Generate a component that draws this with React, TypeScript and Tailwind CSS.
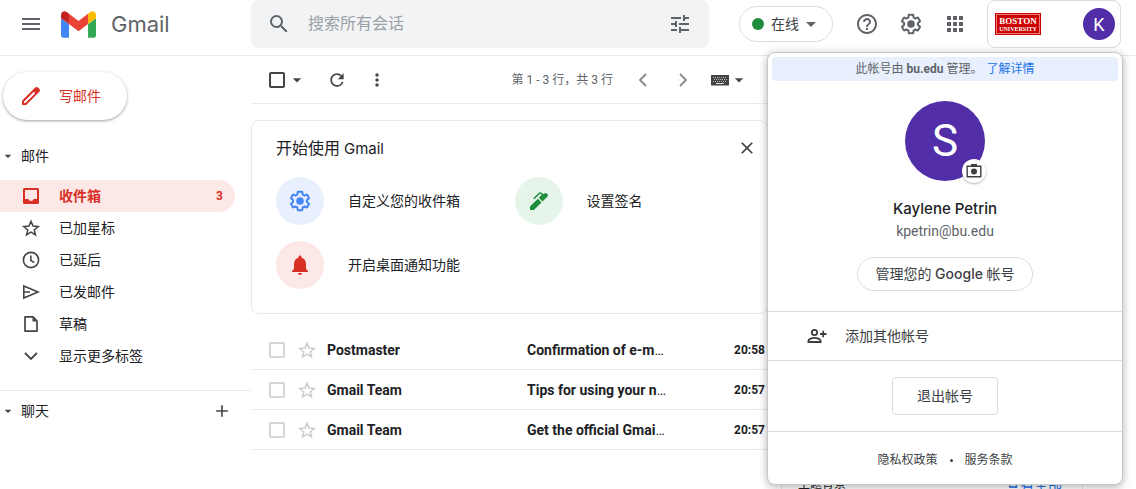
import type { ReactNode } from 'react';
import {
  MdAdd,
  MdApps,
  MdArrowDropDown,
  MdClose,
  MdHelpOutline,
  MdMenu,
  MdMoreVert,
  MdNotifications,
  MdRefresh,
  MdSearch,
  MdTune,
} from 'react-icons/md';

function GearIcon({ className }: { className: string }) {
  return (
    <svg viewBox="0 0 24 24" className={className} fill="currentColor" aria-hidden="true">
      <path d="M13.85 22.25h-3.7c-.74 0-1.36-.54-1.45-1.27l-.27-1.89c-.27-.14-.53-.29-.79-.46l-1.8.72c-.7.26-1.47-.03-1.81-.65L2.2 15.53c-.35-.66-.2-1.44.36-1.88l1.53-1.19c-.01-.15-.02-.3-.02-.46 0-.15.01-.31.02-.46l-1.52-1.19c-.59-.45-.74-1.26-.37-1.88l1.85-3.19c.34-.62 1.11-.9 1.79-.63l1.81.73c.26-.17.52-.32.78-.46l.27-1.91c.09-.7.71-1.25 1.44-1.25h3.7c.74 0 1.36.54 1.45 1.27l.27 1.89c.27.14.53.29.79.46l1.8-.72c.71-.26 1.48.03 1.82.65l1.84 3.18c.36.66.2 1.44-.36 1.88l-1.52 1.19c.01.15.02.3.02.46s-.01.31-.02.46l1.52 1.19c.56.45.72 1.23.37 1.86l-1.86 3.22c-.34.62-1.11.9-1.8.63l-1.8-.72c-.26.17-.52.32-.78.46l-.27 1.91c-.1.68-.72 1.22-1.46 1.22zm-3.23-2h2.76l.37-2.55.53-.22c.44-.18.88-.44 1.34-.78l.45-.34 2.38.96 1.38-2.4-2.03-1.58.07-.56c.03-.26.06-.51.06-.78s-.03-.53-.06-.78l-.07-.56 2.03-1.58-1.39-2.4-2.39.96-.45-.35c-.42-.32-.87-.58-1.33-.77l-.52-.22-.37-2.55h-2.76l-.37 2.55-.53.21c-.44.19-.88.44-1.34.79l-.45.33-2.38-.95-1.39 2.39 2.03 1.58-.07.56a7 7 0 0 0-.06.79c0 .26.02.53.06.78l.07.56-2.03 1.58 1.38 2.4 2.39-.96.45.35c.43.33.86.58 1.33.77l.53.22.38 2.55z" />
      <circle cx="12" cy="12" r="3.8" />
    </svg>
  );
}

function GmailMark() {
  return (
    <svg viewBox="52 42 88 66" className="h-[27px] w-[35px]" aria-hidden="true">
      <path fill="#4285f4" d="M58 108h14V74L52 59v43c0 3.32 2.69 6 6 6" />
      <path fill="#34a853" d="M120 108h14c3.32 0 6-2.69 6-6V59l-20 15" />
      <path fill="#fbbc04" d="M120 48v26l20-15v-8c0-7.42-8.47-11.65-14.4-7.2" />
      <path fill="#ea4335" d="M72 74V48l24 18 24-18v26L96 92" />
      <path fill="#c5221f" d="M52 51v8l20 15V48l-5.6-4.2c-5.94-4.45-14.4-.22-14.4 7.2" />
    </svg>
  );
}

function PencilIcon() {
  return (
    <svg viewBox="0 0 24 24" className="size-6" fill="currentColor" aria-hidden="true">
      <path d="M20.41 4.94l-1.35-1.35c-.78-.78-2.05-.78-2.83 0L3 16.82V21h4.18L20.41 7.77c.79-.78.79-2.05 0-2.83zM6.41 19.06L5 19v-1.36l9.82-9.82 1.41 1.41z" />
    </svg>
  );
}

function InboxIcon() {
  return (
    <svg viewBox="0 0 20 20" className="size-5" fill="currentColor" aria-hidden="true">
      <path fillRule="evenodd" d="M3.6 2h12.8C17.3 2 18 2.7 18 3.6v12.8c0 .9-.7 1.6-1.6 1.6H3.6C2.7 18 2 17.3 2 16.4V3.6C2 2.7 2.7 2 3.6 2zM4 4v9h3.3c.4 1.2 1.4 2 2.7 2s2.3-.8 2.7-2H16V4z" />
    </svg>
  );
}

function StarIcon({ className }: { className: string }) {
  return (
    <svg viewBox="0 0 20 20" className={className} fill="none" stroke="currentColor" strokeWidth="1.5" aria-hidden="true">
      <path d="M10 3.2l2 4.9 5.2.4-4 3.4 1.3 5.1-4.5-2.8L5.500 17l1.300-5.100-4-3.400 5.200-.4z" />
    </svg>
  );
}

function ClockIcon() {
  return (
    <svg viewBox="0 0 20 20" className="size-5" fill="none" stroke="currentColor" strokeWidth="1.6" aria-hidden="true">
      <circle cx="10" cy="10" r="7.600" />
      <path d="M9.800 5.500v4.800l3.400 2.400" />
    </svg>
  );
}

function SendIcon() {
  return (
    <svg viewBox="0 0 20 20" className="size-5" fill="none" stroke="currentColor" strokeWidth="1.6" aria-hidden="true">
      <path d="M2.800 3.900v12.200L17 10zM2.800 10H9" />
    </svg>
  );
}

function FileIcon() {
  return (
    <svg viewBox="0 0 20 20" className="size-5" fill="none" stroke="currentColor" strokeWidth="1.700" aria-hidden="true">
      <path d="M4 2.900h8L16 7v10.100H4z" strokeLinejoin="round" />
      <path d="M11.500 3v4.500H16z" fill="currentColor" stroke="none" />
    </svg>
  );
}

function Chevron({ d, className }: { d: string; className: string }) {
  return (
    <svg viewBox="0 0 20 20" className={className} fill="none" stroke="currentColor" strokeWidth="1.800" aria-hidden="true">
      <path d={d} />
    </svg>
  );
}

function KeyboardIcon() {
  return (
    <svg viewBox="0 0 18 12" className="h-3 w-[18px]" aria-hidden="true">
      <path fill="#444" d="M0 1h18v10.500H0z" />
      <path stroke="#bbb" strokeWidth="1" strokeDasharray="1 1" d="M2 3.500h14M3 5.500h13M2 7.500h14" />
      <path stroke="#ddd" d="M5 9.500h8" />
    </svg>
  );
}

function PenIcon() {
  return (
    <svg viewBox="0 0 20 20" className="size-5" fill="#1e8e3e" aria-hidden="true">
      <path d="M1 15.500L8.800 7.700l3.700 3.700L4.800 19H1z" />
      <path d="M9.800 6.700L14 2.500l.8.800 1-1q.8-.8 1.600 0l1.300 1.300q.8.800 0 1.600l-5.200 5.200z" />
      <path d="M4.800 7.800l5.300-5.300q1.200-1 2.300 0l1.200 1.200" fill="none" stroke="#1e8e3e" strokeWidth="1.600" />
    </svg>
  );
}

function CameraIcon() {
  return (
    <svg viewBox="0 0 16 16" className="size-4" aria-hidden="true">
      <path fill="#3c4043" d="M5 1h6v2H5z" />
      <path fill="none" stroke="#3c4043" strokeWidth="1.400" d="M1.200 3.200h13.600v10.600H1.200z" />
      <circle cx="8" cy="8.500" r="3" fill="#3c4043" />
    </svg>
  );
}

function PersonAddIcon() {
  return (
    <svg viewBox="0 0 20 16" className="h-4 w-5" fill="none" stroke="#3c4043" strokeWidth="1.800" aria-hidden="true">
      <circle cx="7.500" cy="4.500" r="2.700" />
      <path d="M1.400 14v-1.300c0-1.900 4-2.900 6.100-2.900s6.100 1 6.100 2.900V14zM13 6h6.500M16.200 2.700v6.600" />
    </svg>
  );
}

const folders: { label: string; icon: ReactNode; count?: number }[] = [
  { label: '收件箱', icon: <InboxIcon />, count: 3 },
  { label: '已加星标', icon: <StarIcon className="size-5" /> },
  { label: '已延后', icon: <ClockIcon /> },
  { label: '已发邮件', icon: <SendIcon /> },
  { label: '草稿', icon: <FileIcon /> },
  { label: '显示更多标签', icon: <Chevron d="M4 7l6 6 6-6" className="size-5" /> },
];

const mails = [
  { from: 'Postmaster', subject: 'Confirmation of e-m', time: '20:58' },
  { from: 'Gmail Team', subject: 'Tips for using your n', time: '20:57' },
  { from: 'Gmail Team', subject: 'Get the official Gmai', time: '20:57' },
];

function Header() {
  return (
    <header className="flex h-14 shrink-0 items-start border-b border-[#ebebeb] text-[#5f6368]">
      <div className="flex h-12 w-[251px] shrink-0 items-center pl-[19px]">
        <button aria-label="主菜单">
          <MdMenu className="size-6" />
        </button>
        <a href="#inbox" className="ml-[18px] flex items-center gap-[15px]">
          <GmailMark />
          <span className="font-['Inter','Noto_Sans_CJK_SC',sans-serif] text-[22px] leading-7">Gmail</span>
        </a>
      </div>
      <form className="mr-[30px] flex h-12 min-w-0 flex-1 items-center rounded-lg bg-[#f1f3f4] pr-[17px] pl-4">
        <button type="button" aria-label="搜索">
          <MdSearch className="size-6" />
        </button>
        <input
          aria-label="搜索所有会话"
          placeholder="搜索所有会话"
          className="ml-[17px] min-w-0 flex-1 bg-transparent text-base outline-none placeholder:text-[#9aa0a6]"
        />
        <button type="button" aria-label="搜索选项">
          <MdTune className="size-6" />
        </button>
      </form>
      <div className="flex h-12 shrink-0 items-center pr-[15px]">
        <button className="flex h-9 w-[94px] items-center rounded-full border border-[#dadce0] pl-3 text-sm text-[#3c4043]">
          <span className="mr-[7px] size-3 rounded-full bg-[#1e8e3e]" />
          在线
          <MdArrowDropDown className="size-6 text-[#5f6368]" />
        </button>
        <div className="ml-[22px] flex gap-5">
          <button aria-label="支持">
            <MdHelpOutline className="size-6" />
          </button>
          <button aria-label="设置">
            <GearIcon className="size-6" />
          </button>
          <button aria-label="Google 应用">
            <MdApps className="size-6" />
          </button>
        </div>
        <div className="ml-5 flex h-12 w-[134px] items-center justify-between rounded-lg border border-[#dadce0] pr-[5px] pl-[7px]">
          <div className="flex h-[22px] w-[46px] flex-col items-center justify-center bg-[#cc0000] font-['Liberation_Serif',serif] text-white outline-1 -outline-offset-2 outline-[#e88080]">
            <span className="text-[9px] leading-[9px] font-bold">BOSTON</span>
            <span className="text-[6px] leading-[6px] font-bold">UNIVERSITY</span>
          </div>
          <button className="size-8 rounded-full bg-[#512da8] pt-px text-lg text-white" aria-label="Google 帐号：K">
            K
          </button>
        </div>
      </div>
    </header>
  );
}

function Sidebar() {
  return (
    <nav className="w-[251px] shrink-0 pt-4 text-sm text-[#202124]">
      <button className="ml-[3px] flex h-12 w-[124px] items-center gap-4 rounded-full pl-4 text-[#d93025] shadow-[0_1px_2px_0_rgba(60,64,67,.3),0_1px_3px_1px_rgba(60,64,67,.15)]">
        <PencilIcon />
        写邮件
      </button>
      <div className="mt-5 flex h-8 items-center gap-[5px]">
        <MdArrowDropDown className="size-4 text-[#444]" />
        邮件
      </div>
      <ul className="mt-2">
        {folders.map((f) => (
          <li key={f.label}>
            <a
              href="#folder"
              className={
                f.count
                  ? 'mr-4 flex h-8 items-center rounded-r-full bg-[#fce8e6] pr-3 pl-[21px] font-bold text-[#d93025]'
                  : 'mr-4 flex h-8 items-center pr-3 pl-[21px]'
              }
            >
              <span className={f.count ? '' : 'text-[#444]'}>{f.icon}</span>
              <span className="ml-[18px] flex-1">{f.label}</span>
              {f.count && <span className="text-xs">{f.count}</span>}
            </a>
          </li>
        ))}
      </ul>
      <div className="mt-[18px] flex items-center gap-[5px] border-t border-[#ebebeb] pt-[10px] pr-[19px]">
        <MdArrowDropDown className="size-4 text-[#444]" />
        <span className="flex-1">聊天</span>
        <button aria-label="发起聊天">
          <MdAdd className="size-5 text-[#444]" />
        </button>
      </div>
    </nav>
  );
}

function Toolbar() {
  return (
    <div className="flex h-12 items-center border-b border-[#ebebeb] pl-[18px] text-[#444]">
      <input type="checkbox" aria-label="选择" className="size-4 appearance-none rounded-xs border-2 border-[#444]" />
      <MdArrowDropDown className="ml-[2px] size-5" />
      <button aria-label="刷新" className="ml-5">
        <MdRefresh className="size-5" />
      </button>
      <button aria-label="更多" className="ml-5">
        <MdMoreVert className="size-5" />
      </button>
      <span className="ml-auto text-xs text-[#5f6368]">第 1 - 3 行，共 3 行</span>
      <button aria-label="较新" className="ml-5 text-[#888]">
        <Chevron d="M13 4l-6 6 6 6" className="size-5" />
      </button>
      <button aria-label="较旧" className="ml-5 text-[#888]">
        <Chevron d="M7 4l6 6-6 6" className="size-5" />
      </button>
      <button aria-label="输入工具" className="mr-[19px] ml-[18px] flex items-center">
        <KeyboardIcon />
        <MdArrowDropDown className="size-5" />
      </button>
    </div>
  );
}

function Tip({ tint, icon, label }: { tint: string; icon: ReactNode; label: string }) {
  return (
    <button className="flex items-center gap-6 text-sm text-[#202124]">
      <span className={`flex size-12 items-center justify-center rounded-full ${tint}`}>{icon}</span>
      {label}
    </button>
  );
}

function GettingStarted() {
  return (
    <section className="mt-4 rounded-lg border border-[#e8e8e8] px-6 pt-4 pb-6">
      <div className="flex h-6 items-center justify-between">
        <h2 className="text-base text-[#202124]">
          开始使用 <span className="font-['Inter',sans-serif] text-[15px]">Gmail</span>
        </h2>
        <button aria-label="关闭" className="-mr-[14px] pb-[3px]">
          <MdClose className="size-5 text-[#444]" />
        </button>
      </div>
      <div className="mt-4 grid grid-cols-2 gap-x-2.5 gap-y-4">
        <Tip tint="bg-[#e8f0fe]" icon={<GearIcon className="size-6 text-[#4285f4]" />} label="自定义您的收件箱" />
        <Tip tint="bg-[#e6f4ea]" icon={<PenIcon />} label="设置签名" />
        <Tip tint="bg-[#fce8e6]" icon={<MdNotifications className="size-6 text-[#d93025]" />} label="开启桌面通知功能" />
      </div>
    </section>
  );
}

function MailList() {
  return (
    <table className="mt-4 w-full table-fixed border-separate border-spacing-0 text-left text-sm font-bold text-[#202124]">
      <colgroup>
        <col className="w-[46px]" />
        <col className="w-[30px]" />
        <col className="w-[200px]" />
        <col className="w-36" />
        <col />
      </colgroup>
      <tbody>
        {mails.map((m) => (
          <tr key={m.subject} className="h-10 [&>td]:border-b [&>td]:border-[#ebebeb]">
            <td className="pl-[18px]">
              <input
                type="checkbox"
                aria-label={m.subject}
                className="block size-4 appearance-none rounded-xs border-2 border-[#d5d5d5]"
              />
            </td>
            <td>
              <button aria-label="加星标" className="block text-[#ccc]">
                <StarIcon className="size-5" />
              </button>
            </td>
            <td>{m.from}</td>
            <td className="whitespace-nowrap">
              {m.subject}
              <span className="font-normal">…</span>
            </td>
            <td className="pr-[3px] text-right text-xs">{m.time}</td>
          </tr>
        ))}
      </tbody>
    </table>
  );
}

function AccountPopup() {
  return (
    <div
      role="dialog"
      aria-label="帐号信息"
      className="absolute top-[52px] right-[13px] w-[356px] rounded-lg border border-[#c8c8c8] bg-white text-sm text-[#3c4043] shadow-[0_2px_8px_rgba(0,0,0,.3)]"
    >
      <p className="m-1 flex h-6 items-center justify-center rounded bg-[#e8f0fe] text-xs text-[#5f6368]">
        <span>
          此帐号由 <strong className="font-bold">bu.edu</strong> 管理。
        </span>
        <a href="#details" className="ml-1 text-[#1a73e8]">
          了解详情
        </a>
      </p>
      <div className="flex flex-col items-center pt-4 pb-5">
        <div className="relative flex size-20 items-center justify-center rounded-full bg-[#512da8] text-[44px] text-white">
          S
          <button
            aria-label="更换头像"
            className="absolute -right-px -bottom-[2px] flex size-6 items-center justify-center rounded-full bg-white shadow-[0_1px_2px_rgba(60,64,67,.4)]"
          >
            <CameraIcon />
          </button>
        </div>
        <div className="mt-4 font-['Inter','Noto_Sans_CJK_SC',sans-serif] text-[15px] leading-6 font-medium text-[#202124]">
          Kaylene Petrin
        </div>
        <div className="text-[#5f6368]">kpetrin@bu.edu</div>
        <a href="#account" className="mt-4 flex h-[34px] w-44 items-center justify-center rounded-full border border-[#dadce0]">
          <span>
            管理您的 <span className="font-['Inter',sans-serif] font-medium">Google</span> 帐号
          </span>
        </a>
      </div>
      <a href="#add" className="flex h-[49px] items-center gap-[18px] border-t border-[#dadce0] pl-[39px]">
        <PersonAddIcon />
        添加其他帐号
      </a>
      <div className="flex justify-center border-y border-[#dadce0] py-4">
        <button className="h-[38px] rounded border border-[#dadce0] px-6">退出帐号</button>
      </div>
      <div className="flex h-13 items-center justify-center gap-3 pt-1 text-xs">
        <a href="#privacy">隐私权政策</a>
        <span className="size-[3px] rounded-full bg-[#3c4043]" />
        <a href="#terms">服务条款</a>
      </div>
    </div>
  );
}

export default function App() {
  return (
    <div className="relative flex h-screen flex-col overflow-hidden bg-white font-['Roboto','Noto_Sans_CJK_SC',sans-serif]">
      <Header />
      <div className="flex min-h-0 flex-1">
        <Sidebar />
        <main className="min-w-0 flex-1">
          <Toolbar />
          <GettingStarted />
          <MailList />
        </main>
        <aside className="w-[368px] shrink-0 pr-[53px] pl-[13px]">
          <div className="flex h-full flex-col border-x border-[#e8e8e8] pt-[418px] pr-5 pl-4">
            <div className="flex items-center justify-between">
              <h3 className="text-xs text-[#202124]">主题背景</h3>
              <a href="#themes" className="text-sm text-[#1a73e8]">
                查看全部
              </a>
            </div>
          </div>
        </aside>
      </div>
      <AccountPopup />
    </div>
  );
}
